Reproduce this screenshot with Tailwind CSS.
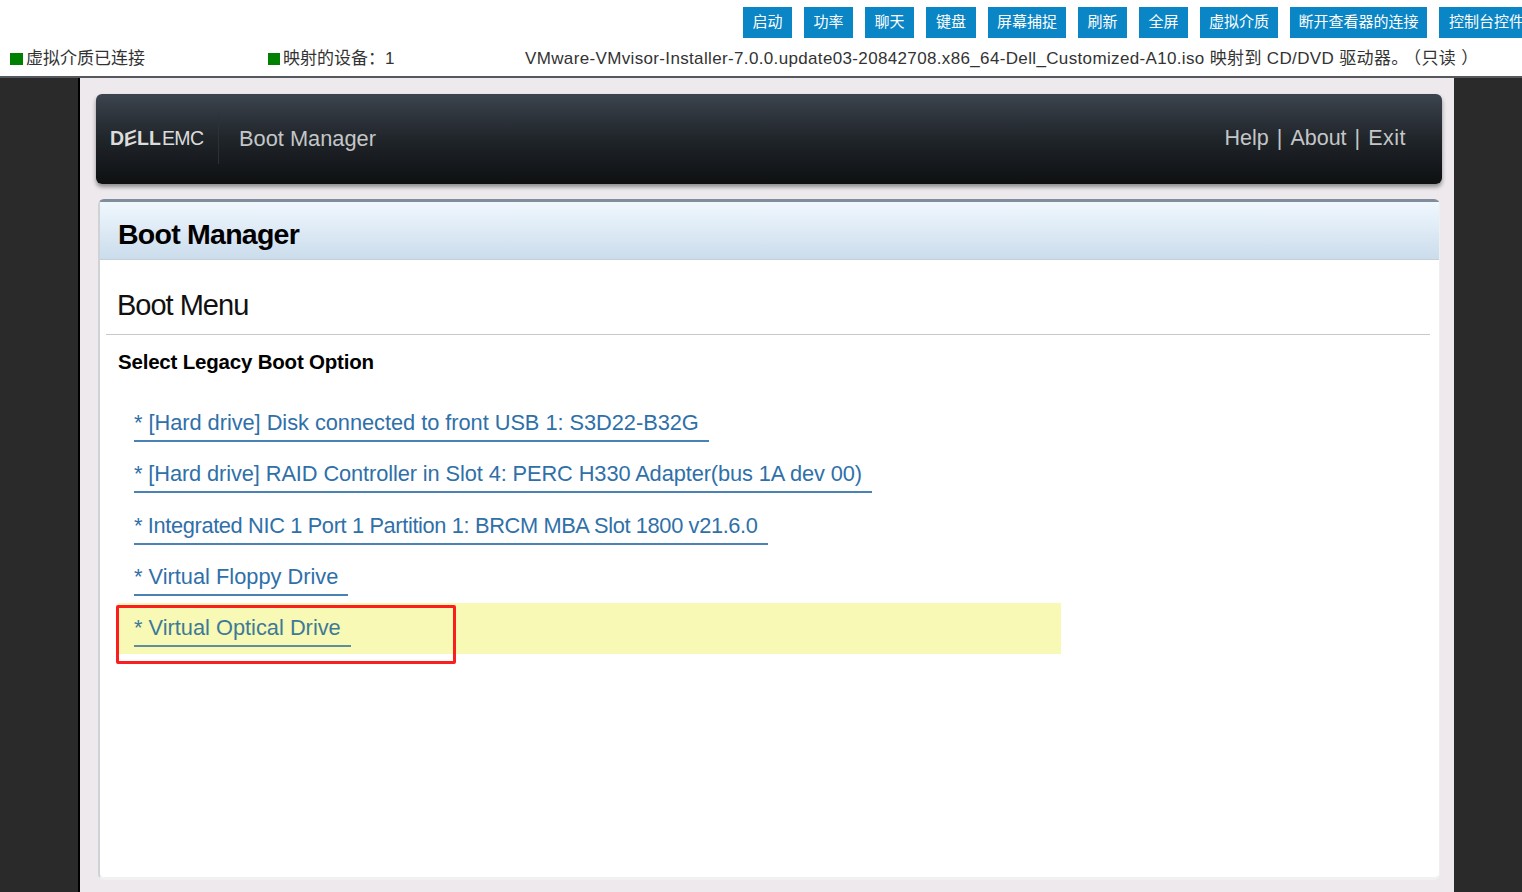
<!DOCTYPE html>
<html lang="zh">
<head>
<meta charset="utf-8">
<script src="https://cdn.jsdelivr.net/npm/@tailwindcss/browser@4"></script>
</head>
<body class="w-[1522px] h-[892px] overflow-hidden bg-white font-['Liberation_Sans','Noto_Sans_CJK_SC',sans-serif]">
<div class="h-[78px] bg-white border-b-2 border-[#55585c] overflow-hidden">
  <div class="flex gap-[12px] pl-[743px] pt-[7px] w-[1700px] h-[38px] text-[15px] text-white">
    <div class="w-[49px] h-[31px] bg-[#0a85c5] flex items-center justify-center">启动</div>
    <div class="w-[49px] h-[31px] bg-[#0a85c5] flex items-center justify-center">功率</div>
    <div class="w-[49px] h-[31px] bg-[#0a85c5] flex items-center justify-center">聊天</div>
    <div class="w-[50px] h-[31px] bg-[#0a85c5] flex items-center justify-center">键盘</div>
    <div class="w-[78px] h-[31px] bg-[#0a85c5] flex items-center justify-center">屏幕捕捉</div>
    <div class="w-[49px] h-[31px] bg-[#0a85c5] flex items-center justify-center">刷新</div>
    <div class="w-[49px] h-[31px] bg-[#0a85c5] flex items-center justify-center">全屏</div>
    <div class="w-[78px] h-[31px] bg-[#0a85c5] flex items-center justify-center">虚拟介质</div>
    <div class="w-[137px] h-[31px] bg-[#0a85c5] flex items-center justify-center">断开查看器的连接</div>
    <div class="w-[108px] h-[31px] bg-[#0a85c5] flex items-center pl-[10px]">控制台控件</div>
  </div>
  <div class="flex items-center h-[41px] text-[17px] text-[#333] whitespace-nowrap">
    <span class="w-[13px] h-[12px] bg-[#008000] ml-[10px]"></span>
    <span class="ml-[3px] w-[242px]">虚拟介质已连接</span>
    <span class="w-[12px] h-[12px] bg-[#008000]"></span>
    <span class="ml-[3px] w-[242px]">映射的设备：1</span>
    <span class="tracking-[0.35px]">VMware-VMvisor-Installer-7.0.0.update03-20842708.x86_64-Dell_Customized-A10.iso 映射到 CD/DVD 驱动器。<span class="ml-[4px]">（只读 ）</span></span>
  </div>
</div>
<div class="h-[814px] bg-[#2a2a2a] pl-[78px] pr-[68px] overflow-hidden">
  <div class="h-full bg-[#ede9ed] border-l-2 border-black pl-[16px] pr-[12px] pt-[16px]">
    <header class="h-[90px] rounded-md bg-gradient-to-b from-[#3c444e] via-[#20252a] to-[#0e1012] shadow-[0_3px_4px_rgba(0,0,0,0.4)] flex items-center text-[#c4c6c8]">
      <div class="w-[123px] h-[50px] border-r border-[#2c3136] flex items-center pl-[14px] text-[19.5px] text-[#dcdcdc] whitespace-nowrap">
        <span class="font-bold">D</span><span class="font-bold inline-block -skew-y-[20deg]">E</span><span class="font-bold">LL</span><span class="ml-[1px] tracking-[-0.6px]">EMC</span>
      </div>
      <div class="ml-[20px] text-[21.8px]">Boot Manager</div>
      <nav class="ml-auto mr-[36px] pb-[2px] text-[21.5px] flex gap-[8px] text-[#c4c6c8]">
        <span>Help</span><span>|</span><span>About</span><span>|</span><span class="tracking-[0.5px]">Exit</span>
      </nav>
    </header>
    <main class="mx-[2px] mt-[15px] h-[681px] bg-white border-t-[3px] border-l-2 border-r border-b-[3px] border-t-[#7f8d9c] border-l-[#cfd3d6] border-r-[#eef0f0] border-b-[#f1f1f1] rounded-md">
      <div class="h-[58px] pt-[7px] bg-gradient-to-b from-[#f0f8fe] to-[#cbdcec] border-b border-[#c4cfd9] flex items-center pl-[18px] text-[28.5px] font-bold text-black tracking-[-0.75px]">Boot Manager</div>
      <div class="pl-[6px] pr-[9px]">
        <h1 class="h-[75px] border-b border-[#c8c8c8] pl-[11px] pt-[27px] text-[29px] leading-[36px] text-[#111] tracking-[-1px]">Boot Menu</h1>
        <h2 class="pl-[12px] pt-[13px] text-[20.5px] leading-[28px] font-bold text-black tracking-[-0.2px]">Select Legacy Boot Option</h2>
        <ul class="mt-[22px] ml-[12px] text-[21.8px] text-[#2f70a8]">
          <li class="h-[51.3px] pl-[16px]"><span class="inline-block h-[44px] pt-[5px] leading-[40px] border-b-2 border-[#4a82b4] pr-[10px] whitespace-nowrap tracking-[-0.04px]">* [Hard drive] Disk connected to front USB 1: S3D22-B32G</span></li>
          <li class="h-[51.3px] pl-[16px]"><span class="inline-block h-[44px] pt-[5px] leading-[40px] border-b-2 border-[#4a82b4] pr-[10px] whitespace-nowrap tracking-[-0.1px]">* [Hard drive] RAID Controller in Slot 4: PERC H330 Adapter(bus 1A dev 00)</span></li>
          <li class="h-[51.3px] pl-[16px]"><span class="inline-block h-[44px] pt-[5px] leading-[40px] border-b-2 border-[#4a82b4] pr-[10px] whitespace-nowrap tracking-[-0.36px]">* Integrated NIC 1 Port 1 Partition 1: BRCM MBA Slot 1800 v21.6.0</span></li>
          <li class="h-[51.3px] pl-[16px]"><span class="inline-block h-[44px] pt-[5px] leading-[40px] border-b-2 border-[#4a82b4] pr-[10px] whitespace-nowrap">* Virtual Floppy Drive</span></li>
          <li class="relative w-[943px] h-[51.3px] pl-[16px] bg-[#f7f9b4] text-[#3d7a98]">
            <span class="inline-block h-[44px] pt-[5px] leading-[40px] border-b-2 border-[#5f8e9c] pr-[10px] whitespace-nowrap">* Virtual Optical Drive</span>
            <div class="absolute left-[-2px] top-[2px] w-[340px] h-[59px] border-[3px] border-[#fb1e1e] rounded-[2px]"></div>
          </li>
        </ul>
      </div>
    </main>
  </div>
</div>
</body>
</html>
